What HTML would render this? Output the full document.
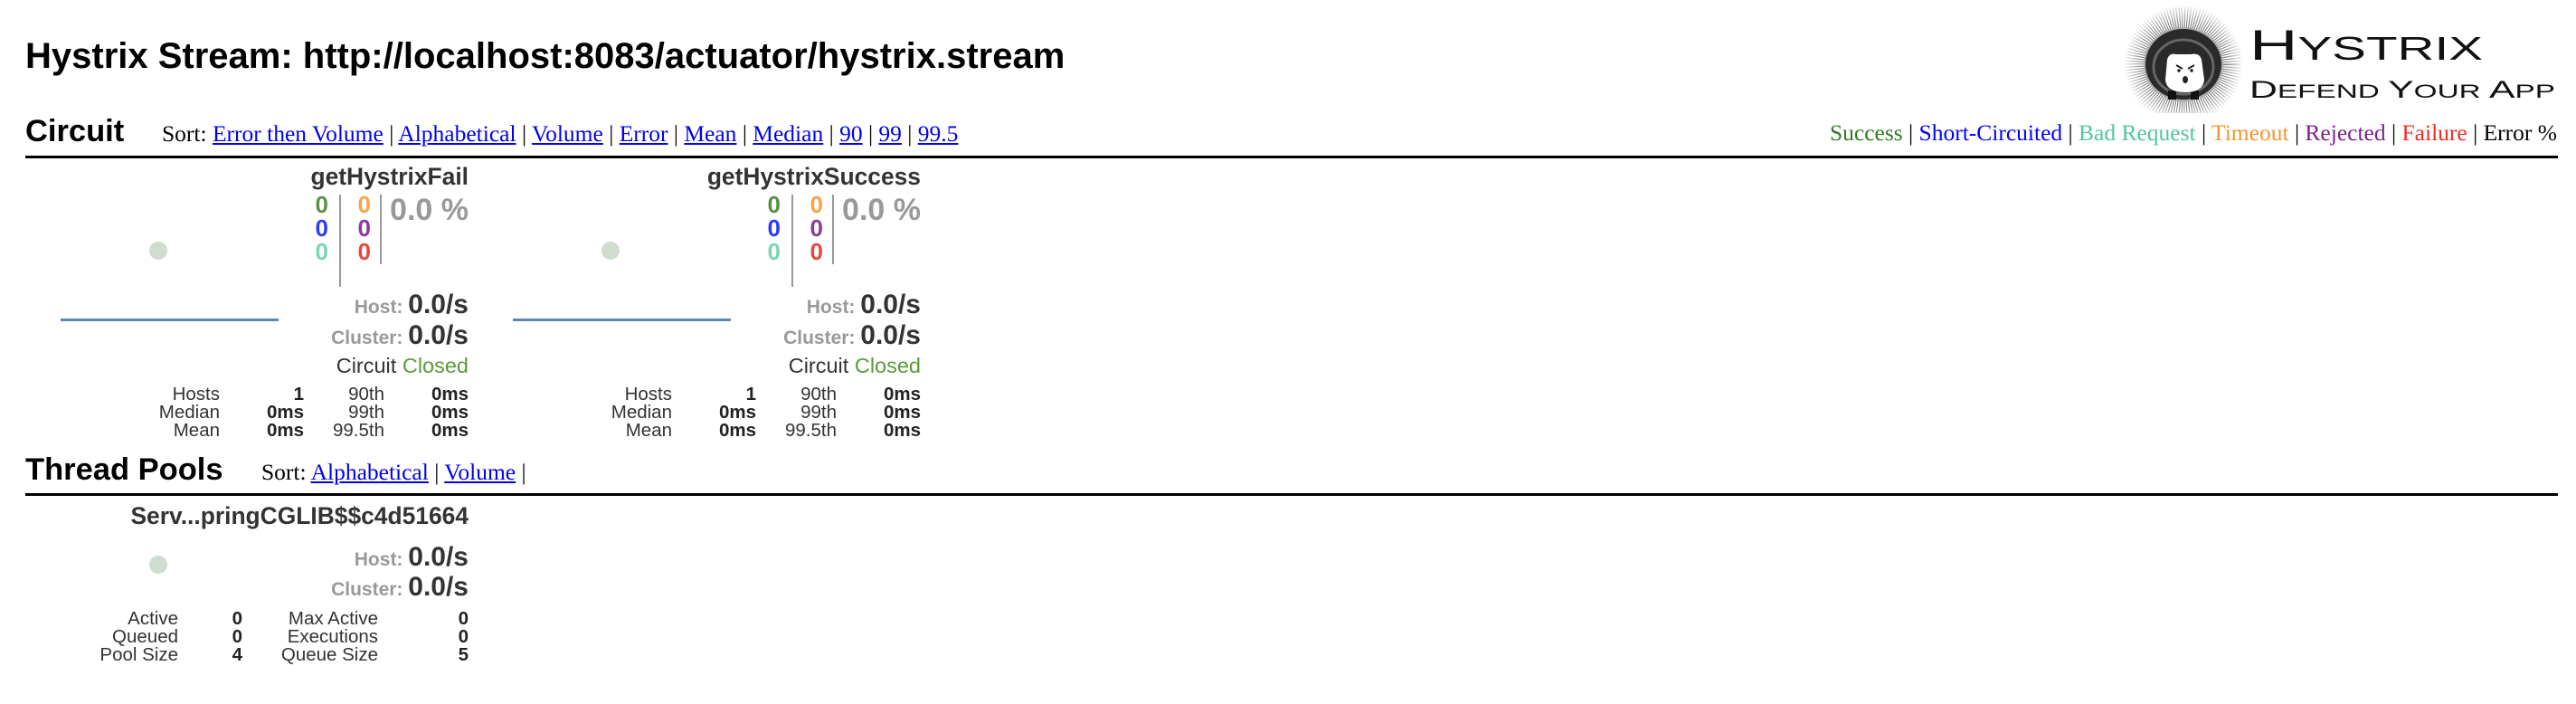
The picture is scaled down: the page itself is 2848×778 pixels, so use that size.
<!DOCTYPE html>
<html><head><meta charset="utf-8"><style>
*{margin:0;padding:0;box-sizing:border-box}
body{width:2848px;height:778px;background:#fff;position:relative;overflow:hidden;font-family:"Liberation Sans",Arial,sans-serif;color:#333}
.a{position:absolute;white-space:nowrap}
.r{position:absolute;white-space:nowrap;text-align:right}
.serif{font-family:"Liberation Serif","Times New Roman",serif;color:#000}
.serif a{color:#00e;text-decoration:underline}
.hr{position:absolute;left:28px;width:2800px;height:3px;background:#000}
.dot{position:absolute;width:20px;height:20px;border-radius:50%;background:#d0dcd0}
.bl{position:absolute;height:3px;background:#5b87b5}
.vl{position:absolute;width:2px;background:#999}
.c{font-weight:bold;font-size:26px;line-height:26px;text-align:right}
.st{font-size:20.5px;line-height:20px;color:#333}
.st b{color:#222}
</style></head><body>

<div class="a" style="left:28px;top:42px;font-size:40px;line-height:40px;font-weight:bold;color:#000">Hystrix Stream: http://localhost:8083/actuator/hystrix.stream</div>

<svg class="a" style="left:2340px;top:0" width="508" height="125" viewBox="2340 0 508 125">
<defs><radialGradient id="g" cx="2414" cy="71" r="66" gradientUnits="userSpaceOnUse"><stop offset="0.55" stop-color="#444"/><stop offset="1" stop-color="#fff"/></radialGradient></defs>
<circle cx="2414" cy="71" r="51" fill="none" stroke="url(#g)" stroke-width="28" stroke-dasharray="1.2 1.6"/>
<ellipse cx="2414" cy="71" rx="43" ry="40" fill="#2a2a2a" stroke="#aaa" stroke-width="2"/>
<ellipse cx="2414" cy="74" rx="33" ry="30" fill="none" stroke="#666" stroke-width="3"/>
<rect x="2397" y="100" width="9" height="10" fill="#111"/><rect x="2422" y="100" width="9" height="10" fill="#111"/>
<path d="M2396 66 Q2398 58 2406 60 L2422 60 Q2432 58 2434 66 L2437 88 Q2436 102 2416 102 Q2395 102 2394 88 Z" fill="#fff"/>
<path d="M2406 72 L2413 76 M2426 72 L2419 76" stroke="#222" stroke-width="2"/>
<circle cx="2409" cy="78" r="1.8" fill="#222"/><circle cx="2423" cy="78" r="1.8" fill="#222"/>
<ellipse cx="2416" cy="88" rx="3" ry="4" fill="#222"/>
<text x="2487" y="66" textLength="258" lengthAdjust="spacingAndGlyphs" font-family="Liberation Sans,sans-serif" fill="#111"><tspan font-size="47">H</tspan><tspan font-size="36">YSTRIX</tspan></text>
<text x="2487" y="108" textLength="338" lengthAdjust="spacingAndGlyphs" font-family="Liberation Sans,sans-serif" fill="#111"><tspan font-size="27">D</tspan><tspan font-size="21">EFEND </tspan><tspan font-size="27">Y</tspan><tspan font-size="21">OUR </tspan><tspan font-size="27">A</tspan><tspan font-size="21">PP</tspan></text>
</svg>

<div class="a" style="left:28px;top:128px;font-size:34.5px;line-height:34px;font-weight:bold;color:#000">Circuit</div>
<div class="a serif" style="left:179px;top:135px;font-size:25.5px;line-height:25px">Sort: <a>Error then Volume</a> | <a>Alphabetical</a> | <a>Volume</a> | <a>Error</a> | <a>Mean</a> | <a>Median</a> | <a>90</a> | <a>99</a> | <a>99.5</a></div>
<div class="r serif" style="right:21px;top:134px;font-size:25.5px;line-height:25px"><span style="color:#2f7a1f">Success</span> | <span style="color:#0000ff">Short-Circuited</span> | <span style="color:#4fc79a">Bad Request</span> | <span style="color:#f7942d">Timeout</span> | <span style="color:#7a1f8a">Rejected</span> | <span style="color:#f52a22">Failure</span> | Error %</div>
<div class="hr" style="top:172px"></div>

<!-- card 1 -->
<div class="r" style="right:2330px;top:182px;font-size:26.4px;line-height:26px;font-weight:bold">getHystrixFail</div>
<div class="r c" style="right:2485px;top:213px"><div style="color:#5a9142">0</div><div style="color:#2b3cf5">0</div><div style="color:#7ad7b0">0</div></div>
<div class="r c" style="right:2438px;top:213px"><div style="color:#f7a54a">0</div><div style="color:#8a3b9a">0</div><div style="color:#e8473d">0</div></div>
<div class="vl" style="left:375px;top:215px;height:102px"></div>
<div class="vl" style="left:420px;top:215px;height:77px"></div>
<div class="r" style="right:2330px;top:215px;font-size:34px;line-height:34px;font-weight:bold;color:#999">0.0 %</div>
<div class="dot" style="left:165px;top:267px"></div>
<div class="bl" style="left:67px;top:352px;width:241px"></div>
<div class="r" style="right:2330px;top:322px;font-size:30px;line-height:30px;font-weight:bold"><span style="font-size:21px;color:#999">Host: </span>0.0/s</div>
<div class="r" style="right:2330px;top:356px;font-size:30px;line-height:30px;font-weight:bold"><span style="font-size:21px;color:#999">Cluster: </span>0.0/s</div>
<div class="r" style="right:2330px;top:393px;font-size:23.5px;line-height:23px">Circuit <span style="color:#5a9a3a">Closed</span></div>
<div class="r st" style="right:2605px;top:426px">Hosts<br>Median<br>Mean</div>
<div class="r st" style="right:2512px;top:426px"><b>1<br>0ms<br>0ms</b></div>
<div class="r st" style="right:2423px;top:426px">90th<br>99th<br>99.5th</div>
<div class="r st" style="right:2330px;top:426px"><b>0ms<br>0ms<br>0ms</b></div>

<!-- card 2 -->
<div class="r" style="right:1830px;top:182px;font-size:26.4px;line-height:26px;font-weight:bold">getHystrixSuccess</div>
<div class="r c" style="right:1985px;top:213px"><div style="color:#5a9142">0</div><div style="color:#2b3cf5">0</div><div style="color:#7ad7b0">0</div></div>
<div class="r c" style="right:1938px;top:213px"><div style="color:#f7a54a">0</div><div style="color:#8a3b9a">0</div><div style="color:#e8473d">0</div></div>
<div class="vl" style="left:875px;top:215px;height:102px"></div>
<div class="vl" style="left:920px;top:215px;height:77px"></div>
<div class="r" style="right:1830px;top:215px;font-size:34px;line-height:34px;font-weight:bold;color:#999">0.0 %</div>
<div class="dot" style="left:665px;top:267px"></div>
<div class="bl" style="left:567px;top:352px;width:241px"></div>
<div class="r" style="right:1830px;top:322px;font-size:30px;line-height:30px;font-weight:bold"><span style="font-size:21px;color:#999">Host: </span>0.0/s</div>
<div class="r" style="right:1830px;top:356px;font-size:30px;line-height:30px;font-weight:bold"><span style="font-size:21px;color:#999">Cluster: </span>0.0/s</div>
<div class="r" style="right:1830px;top:393px;font-size:23.5px;line-height:23px">Circuit <span style="color:#5a9a3a">Closed</span></div>
<div class="r st" style="right:2105px;top:426px">Hosts<br>Median<br>Mean</div>
<div class="r st" style="right:2012px;top:426px"><b>1<br>0ms<br>0ms</b></div>
<div class="r st" style="right:1923px;top:426px">90th<br>99th<br>99.5th</div>
<div class="r st" style="right:1830px;top:426px"><b>0ms<br>0ms<br>0ms</b></div>

<!-- thread pools -->
<div class="a" style="left:28px;top:502px;font-size:34.5px;line-height:34px;font-weight:bold;color:#000">Thread Pools</div>
<div class="a serif" style="left:289px;top:509px;font-size:25.5px;line-height:25px">Sort: <a>Alphabetical</a> | <a>Volume</a> |</div>
<div class="hr" style="top:545px"></div>
<div class="r" style="right:2330px;top:557px;font-size:26.4px;line-height:26px;font-weight:bold">Serv...pringCGLIB$$c4d51664</div>
<div class="dot" style="left:165px;top:614px"></div>
<div class="r" style="right:2330px;top:601px;font-size:30px;line-height:30px;font-weight:bold"><span style="font-size:21px;color:#999">Host: </span>0.0/s</div>
<div class="r" style="right:2330px;top:634px;font-size:30px;line-height:30px;font-weight:bold"><span style="font-size:21px;color:#999">Cluster: </span>0.0/s</div>
<div class="r st" style="right:2651px;top:674px">Active<br>Queued<br>Pool Size</div>
<div class="r st" style="right:2580px;top:674px"><b>0<br>0<br>4</b></div>
<div class="r st" style="right:2430px;top:674px">Max Active<br>Executions<br>Queue Size</div>
<div class="r st" style="right:2330px;top:674px"><b>0<br>0<br>5</b></div>
</body></html>
